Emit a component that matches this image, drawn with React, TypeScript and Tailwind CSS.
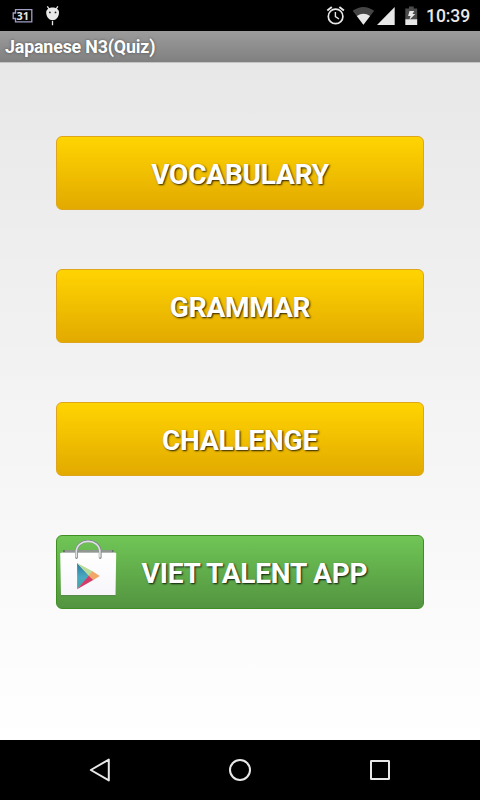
type MenuItem = {
  label: string;
  store?: boolean;
};

const items: MenuItem[] = [
  { label: "VOCABULARY" },
  { label: "GRAMMAR" },
  { label: "CHALLENGE" },
  { label: "VIET TALENT APP", store: true },
];

const StatusBar = () => {
  return (
    <div className="flex h-[31px] items-center justify-between bg-black pl-[12px] pr-[10px] text-[#e8e8e8]">
      <div className="flex h-full items-center">
        {/* battery level */}
        <svg width="22" height="31" viewBox="0 0 22 31">
          <path
            d="M3.5 9.7H19.8V21.8H3.5V18.5H1.2V13H3.5Z"
            fill="none"
            stroke="#a0a0c4"
            strokeWidth="1.3"
          />
          <text
            x="10.8"
            y="19.8"
            fontSize="11"
            fontWeight="700"
            fontFamily="Open Sans, sans-serif"
            textAnchor="middle"
            fill="#e4e4e4"
          >
            31
          </text>
        </svg>
        {/* debug android */}
        <svg className="ml-[11px]" width="16" height="31" viewBox="0 0 16 31">
          <path
            d="M1.2 12.5C1.2 5.8 14 5.8 14 12.5C14 17 11 20.2 7.6 20.2C4.2 20.2 1.2 17 1.2 12.5Z"
            fill="#e8e8e8"
          />
          <path
            d="M2.3 6.3L4.5 9.5M12.9 6.3L10.7 9.5M7.5 21V25.3"
            stroke="#e8e8e8"
            strokeWidth="1.3"
          />
          <circle cx="4.9" cy="12.4" r="0.9" fill="#222" />
          <circle cx="10.5" cy="12.4" r="0.9" fill="#222" />
        </svg>
      </div>
      <div className="flex h-full items-center">
        <svg width="20" height="31" viewBox="0 0 20 31">
          <g fill="none" stroke="#e8e8e8" strokeWidth="1.7">
            <circle cx="9.6" cy="16.4" r="7.3" />
            <path d="M1.3 10.6L5.8 7M17.9 10.6L13.4 7" strokeWidth="1.9" />
            <path d="M9.4 12V16.6L13 19" strokeWidth="1.4" />
          </g>
        </svg>
        <svg className="ml-[6px]" width="23" height="31" viewBox="0 0 23 31">
          <path d="M0.7 10.8Q11.4 3 22.2 10.8L11.4 24.8Z" fill="#454545" />
          <path d="M4.8 16Q11.4 11.3 18.1 16L11.4 24.8Z" fill="#e8e8e8" />
        </svg>
        <svg className="ml-[2px]" width="18" height="31" viewBox="0 0 18 31">
          <path d="M17.7 7V25H0Z" fill="#e8e8e8" />
        </svg>
        <svg className="ml-[10px]" width="13" height="31" viewBox="0 0 13 31">
          <path d="M4 6.5H8.7V8.5H12.2V20H0.3V8.5H4Z" fill="#4c4c4c" />
          <path d="M0.3 19.3H12.2V25H0.3Z" fill="#e8e8e8" />
          <path
            d="M4.5 11H9.3L7.5 14H10.3L4.2 20L5.6 16H3.1Z"
            fill="#e8e8e8"
          />
        </svg>
        <span className="ml-[8px] w-[44px] whitespace-nowrap pt-[3px] text-[17.6px] font-medium leading-none tracking-[-0.1px]">
          10:39
        </span>
      </div>
    </div>
  );
};

const StoreIcon = () => {
  return (
    <svg width="58" height="58" viewBox="0 0 58 58">
      <defs>
        <linearGradient id="blue" x1="0" y1="0" x2="0" y2="1">
          <stop offset="0" stopColor="#287b9d" />
          <stop offset="0.55" stopColor="#4aa9c2" />
          <stop offset="1" stopColor="#43a3a0" />
        </linearGradient>
        <linearGradient id="bag" x1="0" y1="0" x2="0" y2="1">
          <stop offset="0" stopColor="#fff" />
          <stop offset="1" stopColor="#f7f5fa" />
        </linearGradient>
      </defs>
      <path d="M3 10H53.5V13.5H3Z" fill="#68716a" />
      <path d="M5 11H52" stroke="#b9beb9" strokeWidth="1" />
      <path d="M0.2 13L3 12.5H54L56.2 13L55.5 55.2H1Z" fill="url(#bag)" />
      <path d="M1 55.6H55.5" stroke="#477a3c" strokeWidth="0.8" />
      <path
        d="M16.5 17.5V12C16.5 -2.4 40.2 -2.4 40.2 12V17.5"
        fill="none"
        stroke="#83898c"
        strokeWidth="2.8"
        strokeLinecap="round"
      />
      <path
        d="M16.3 17V12C16.3 -2.2 39.9 -2.2 39.9 12V17"
        fill="none"
        stroke="#dfe2e4"
        strokeWidth="1.6"
        strokeLinecap="round"
      />
      <path d="M17.1 23V49.3L29.5 36Z" fill="url(#blue)" />
      <path d="M17.1 23L33 31.5L29 36Z" fill="#b9da98" />
      <path d="M32.5 31.2L39.8 36L33 40.2L28.5 35.8Z" fill="#f2a768" />
      <path d="M17.1 49.3L33.2 40.1L28.8 35.8Z" fill="#d43c67" />
    </svg>
  );
};

const MenuButton = ({ item }: { item: MenuItem }) => {
  return (
    <button
      className={`flex h-[74px] w-full items-center rounded-[6px] border text-[28px] font-bold tracking-[-0.2px] text-white [text-shadow:1px_1px_2px_rgba(0,0,0,0.85)] ${
        item.store
          ? "border-[#3f8f22] bg-linear-to-b from-[#70c656] to-[#539440]"
          : "border-[#dfa51c] bg-linear-to-b from-[#ffd402] to-[#e2aa00]"
      }`}
    >
      {item.store && (
        <span className="ml-[3px] mb-[7px] w-[26px] shrink-0">
          <StoreIcon />
        </span>
      )}
      <span className="grow pt-[4px] text-center leading-none">
        {item.label}
      </span>
    </button>
  );
};

const NavBar = () => {
  return (
    <div className="flex h-[60px] items-center justify-between bg-black px-[88px]">
      <svg width="24" height="24" viewBox="0 0 24 24">
        <path
          d="M20.8 1.6V22.4L2.8 12Z"
          fill="none"
          stroke="#e8e8e8"
          strokeWidth="2"
          strokeLinejoin="round"
        />
      </svg>
      <svg width="24" height="24" viewBox="0 0 24 24">
        <circle
          cx="12"
          cy="12"
          r="10"
          fill="none"
          stroke="#e8e8e8"
          strokeWidth="2"
        />
      </svg>
      <svg width="24" height="24" viewBox="0 0 24 24">
        <rect
          x="3"
          y="3"
          width="18"
          height="18"
          rx="0.3"
          fill="none"
          stroke="#e8e8e8"
          strokeWidth="2"
        />
      </svg>
    </div>
  );
};

export default function App() {
  return (
    <div className="flex h-[800px] w-[480px] flex-col overflow-hidden bg-black font-[Roboto,sans-serif]">
      <StatusBar />
      <div className="flex h-[32px] items-center border-b border-[#c4c4c4] bg-linear-to-b from-[#9c9c9c] to-[#808080] pl-[5px] pt-px">
        <h1 className="text-[17.8px] font-bold leading-none tracking-[-0.15px] text-white [text-shadow:0_0_3px_rgba(0,0,0,0.45)]">
          Japanese N3(Quiz)
        </h1>
      </div>
      <main className="flex grow flex-col gap-[59px] bg-linear-to-b from-[#e8e8e8] to-white px-[56px] pt-[73px]">
        {items.map((item) => (
          <MenuButton key={item.label} item={item} />
        ))}
      </main>
      <NavBar />
    </div>
  );
}
